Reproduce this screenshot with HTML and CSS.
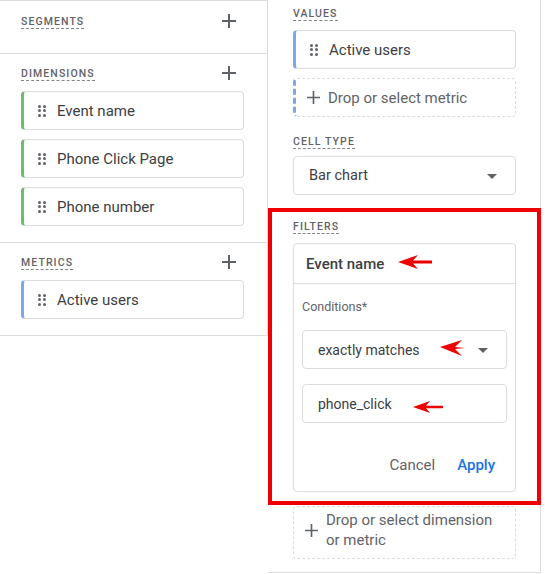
FILE: index.html
```html
<!DOCTYPE html>
<html>
<head>
<meta charset="utf-8">
<link rel="stylesheet" href="styles.css">
</head>
<body>
<div class="page">
  <div class="left">
    <section class="sec sec-segments">
      <div class="head"><span class="label">Segments</span>
        <svg class="plus" viewBox="0 0 14 14"><path d="M7 0v14M0 7h14"/></svg></div>
    </section>
    <section class="sec">
      <div class="head"><span class="label">Dimensions</span>
        <svg class="plus" viewBox="0 0 14 14"><path d="M7 0v14M0 7h14"/></svg></div>
      <div class="chips">
        <div class="chip green"><span class="grip"><i></i><i></i><i></i><i></i><i></i><i></i></span>Event name</div>
        <div class="chip green"><span class="grip"><i></i><i></i><i></i><i></i><i></i><i></i></span>Phone Click Page</div>
        <div class="chip green"><span class="grip"><i></i><i></i><i></i><i></i><i></i><i></i></span>Phone number</div>
      </div>
    </section>
    <section class="sec">
      <div class="head"><span class="label">Metrics</span>
        <svg class="plus" viewBox="0 0 14 14"><path d="M7 0v14M0 7h14"/></svg></div>
      <div class="chips">
        <div class="chip blue"><span class="grip"><i></i><i></i><i></i><i></i><i></i><i></i></span>Active users</div>
      </div>
    </section>
  </div>
  <div class="right">
    <span class="label">Values</span>
    <div class="chip blue mt9"><span class="grip"><i></i><i></i><i></i><i></i><i></i><i></i></span>Active users</div>
    <div class="drop metric mt9">
      <svg class="plus sm" viewBox="0 0 14 14"><path d="M7 0v14M0 7h14"/></svg>Drop or select metric
    </div>
    <span class="label mt17">Cell type</span>
    <div class="select mt7">Bar chart<span class="caret"></span></div>
    <span class="label mt24">Filters</span>
    <div class="card">
      <div class="card-head">Event name</div>
      <div class="card-body">
        <div class="cond">Conditions*</div>
        <div class="select inner">exactly matches<span class="caret"></span></div>
        <div class="input">phone_click</div>
        <div class="actions">
          <button class="btn">Cancel</button>
          <button class="btn primary">Apply</button>
        </div>
      </div>
    </div>
    <div class="drop dim">
      <svg class="plus sm" viewBox="0 0 14 14"><path d="M7 0v14M0 7h14"/></svg>
      <span>Drop or select dimension<br>or metric</span>
    </div>
  </div>
  <div class="redbox"></div>
  <svg class="arrow a1" viewBox="0 0 34 16"><path d="M0 8 L20 1 L15 6.5 L34 6.5 L34 9.5 L15 9.5 L20 15 Z"/></svg>
  <svg class="arrow a2" viewBox="0 0 25 16"><path d="M0 7 L22 0 L15 7 L25 8 L15 9 L22 16 Z"/></svg>
  <svg class="arrow a3" viewBox="0 0 30 14"><path d="M0 7 L17 1 L13 5.8 L30 5.8 L30 8.2 L13 8.2 L17 13 Z"/></svg>
</div>
</body>
</html>
```

FILE: styles.css
```css
* { box-sizing: border-box; }
html, body { margin: 0; padding: 0; background: #fff; }
body { font-family: Roboto, "Noto Sans", Arial, sans-serif; color: #3c4043; }

.page { position: relative; display: flex; align-items: flex-start; width: 545px; height: 574px; }

.left {
  width: 268px;
  border-top: 1px solid #dadce0;
  border-right: 1px solid #dadce0;
}
.sec { padding: 11px 23px 16px 21px; border-bottom: 1px solid #dadce0; }
.sec-segments { height: 53px; padding-top: 12px; }
.head { display: flex; justify-content: space-between; align-items: center; height: 16px; }
.head .plus { margin-right: 8px; }

.label {
  display: inline-block;
  font-size: 10.5px;
  font-weight: 500;
  letter-spacing: 1.1px;
  text-transform: uppercase;
  color: #5f6368;
  line-height: 12px;
  padding-top: 2px;
  border-bottom: 1px dashed #80868b;
  align-self: flex-start;
}
.head .label { align-self: center; }

.plus { width: 14px; height: 14px; fill: none; stroke: #5f6368; stroke-width: 2; }
.plus.sm { width: 13px; height: 13px; stroke-width: 1.8; }

.chips { display: flex; flex-direction: column; gap: 9px; margin-top: 10px; }
.chip {
  height: 39px;
  display: flex;
  align-items: center;
  border: 1px solid #dadce0;
  border-radius: 4px;
  padding-left: 14px;
  font-size: 15px;
  color: #3c4043;
  background: #fff;
}
.chip.green { border-left: 3px solid #6fbb72; }
.chip.blue { border-left: 3px solid #7ea7ea; }

.grip {
  display: grid;
  grid-template-columns: 3px 3px;
  grid-auto-rows: 3px;
  column-gap: 2px;
  row-gap: 1.5px;
  margin-right: 11px;
}
.grip i { width: 3px; height: 3px; border-radius: 50%; background: #5f6368; }

.right {
  width: 273px;
  height: 573px;
  padding: 6px 24px 0 25px;
  border-right: 1px solid #dadce0;
  border-bottom: 1px solid #dadce0;
  display: flex;
  flex-direction: column;
  align-items: stretch;
}
.mt9 { margin-top: 9px; }
.mt17 { margin-top: 17px; }
.mt7 { margin-top: 7px; }
.mt24 { margin-top: 24px; }

.drop {
  border: 1px dashed #dadce0;
  border-radius: 4px;
  display: flex;
  align-items: center;
  font-size: 15px;
  color: #5f6368;
}
.drop.metric {
  height: 39px;
  padding-left: 11px;
  gap: 8px;
  border-left: 3px dashed #7ea7ea;
}
.drop.dim {
  margin-top: 14px;
  height: 53px;
  padding-left: 11px;
  padding-bottom: 5px;
  gap: 8px;
  line-height: 20px;
}

.select {
  position: relative;
  height: 39px;
  border: 1px solid #dadce0;
  border-radius: 4px;
  display: flex;
  align-items: center;
  padding-left: 15px;
  font-size: 14.5px;
  color: #3c4043;
}
.caret {
  position: absolute;
  right: 18px;
  top: 17px;
  width: 0; height: 0;
  border-left: 5px solid transparent;
  border-right: 5px solid transparent;
  border-top: 5px solid #5f6368;
}

.card {
  margin-top: 9px;
  border: 1px solid #dadce0;
  border-radius: 4px;
  height: 249px;
}
.card-head {
  height: 40px;
  border-bottom: 1px solid #dadce0;
  display: flex;
  align-items: center;
  padding-left: 12px;
  font-size: 15px;
  font-weight: 500;
  color: #3c4043;
}
.card-body { padding: 15px 8px 0 8px; }
.cond { font-size: 12.5px; color: #5f6368; line-height: 16px; }
.select.inner { margin-top: 15px; font-size: 14px; }
.input {
  margin-top: 15px;
  height: 39px;
  border: 1px solid #dadce0;
  border-radius: 4px;
  display: flex;
  align-items: center;
  padding-left: 15px;
  font-size: 14px;
  color: #3c4043;
}
.actions {
  display: flex;
  justify-content: flex-end;
  margin-top: 24px;
  gap: 6px;
  padding-right: 4px;
}
.btn {
  font-family: inherit;
  font-size: 15px;
  font-weight: 400;
  background: none;
  border: 0;
  height: 36px;
  padding: 0 8px;
  color: #5f6368;
}
.btn.primary { color: #1a73e8; font-weight: 500; }

.redbox {
  position: absolute;
  left: 268px;
  top: 208px;
  width: 273px;
  height: 297px;
  border: 4px solid #ee0000;
}
.arrow { position: absolute; fill: #ee0000; }
.a1 { left: 398px; top: 254px; width: 34px; height: 16px; }
.a2 { left: 440px; top: 340px; width: 25px; height: 16px; }
.a3 { left: 413px; top: 400px; width: 30px; height: 14px; }
```
